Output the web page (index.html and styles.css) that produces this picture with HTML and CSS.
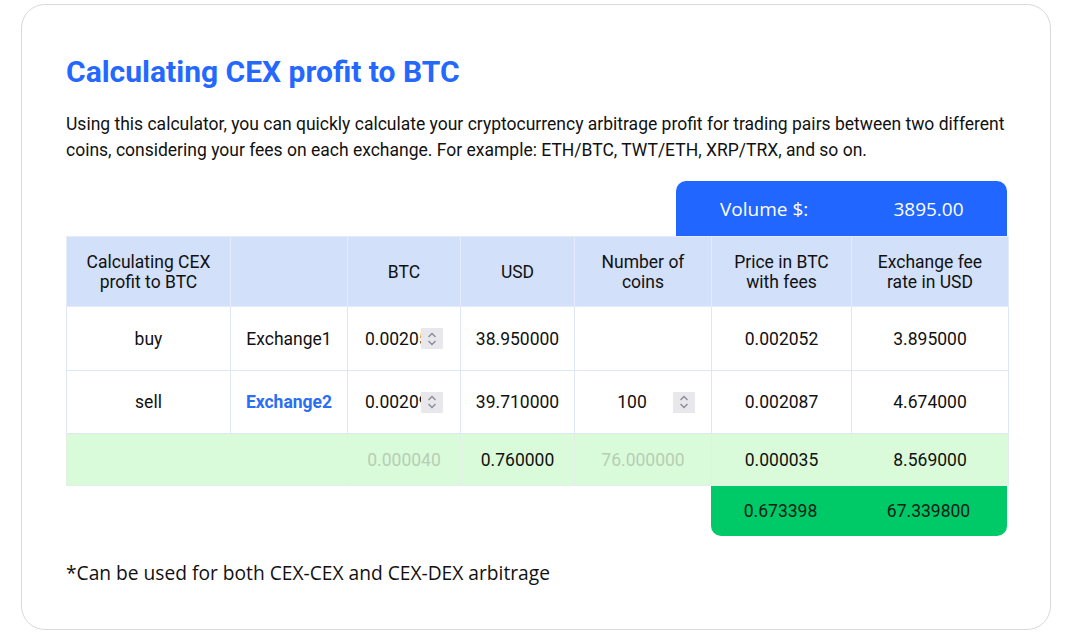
FILE: index.html
```html
<!DOCTYPE html>
<html lang="en">
<head>
  <meta charset="UTF-8" />
  <meta name="viewport" content="width=device-width, initial-scale=1.0" />
  <title>Calculating CEX profit to BTC</title>
  <link rel="stylesheet" href="styles.css">
</head>
<body>

  <div class="card">
    <h1>Calculating CEX profit to BTC</h1>
    <p class="intro">
      Using this calculator, you can quickly calculate your cryptocurrency arbitrage profit for trading pairs between two different
      coins, considering your fees on each exchange. For example: ETH/BTC, TWT/ETH, XRP/TRX, and so on.
    </p>

    <div class="volume-wrap">
      <div class="volume">
        <span class="volume-label">Volume $:</span>
        <span class="volume-value">3895.00</span>
      </div>
    </div>

    <table class="calc">
      <colgroup>
        <col style="width:164px">
        <col style="width:117px">
        <col style="width:113px">
        <col style="width:114px">
        <col style="width:137px">
        <col style="width:140px">
        <col style="width:157px">
      </colgroup>
      <thead>
        <tr>
          <th>Calculating CEX<br>profit to BTC</th>
          <th></th>
          <th>BTC</th>
          <th>USD</th>
          <th>Number of<br>coins</th>
          <th>Price in BTC<br>with fees</th>
          <th>Exchange fee<br>rate in USD</th>
        </tr>
      </thead>
      <tbody>
        <tr class="row-buy">
          <td>buy</td>
          <td>Exchange1</td>
          <td class="input-cell">
            <div class="num num-btc">
              <span class="num-text">0.00205</span>
              <span class="spin"><svg width="10" height="16" viewBox="0 0 10 16"><path d="M1.5 6 L5 2.5 L8.5 6 M1.5 10 L5 13.5 L8.5 10" fill="none" stroke="#8a8a92" stroke-width="1.3"/></svg></span>
            </div>
          </td>
          <td>38.950000</td>
          <td></td>
          <td>0.002052</td>
          <td>3.895000</td>
        </tr>
        <tr class="row-sell">
          <td>sell</td>
          <td class="exchange-link">Exchange2</td>
          <td class="input-cell">
            <div class="num num-btc">
              <span class="num-text">0.00209</span>
              <span class="spin"><svg width="10" height="16" viewBox="0 0 10 16"><path d="M1.5 6 L5 2.5 L8.5 6 M1.5 10 L5 13.5 L8.5 10" fill="none" stroke="#8a8a92" stroke-width="1.3"/></svg></span>
            </div>
          </td>
          <td>39.710000</td>
          <td class="input-cell">
            <div class="num num-coins">
              <span class="num-text">100</span>
              <span class="spin"><svg width="10" height="16" viewBox="0 0 10 16"><path d="M1.5 6 L5 2.5 L8.5 6 M1.5 10 L5 13.5 L8.5 10" fill="none" stroke="#8a8a92" stroke-width="1.3"/></svg></span>
            </div>
          </td>
          <td>0.002087</td>
          <td>4.674000</td>
        </tr>
        <tr class="row-diff">
          <td colspan="2"></td>
          <td class="dim">0.000040</td>
          <td>0.760000</td>
          <td class="dim">76.000000</td>
          <td>0.000035</td>
          <td>8.569000</td>
        </tr>
      </tbody>
    </table>

    <div class="total-wrap">
      <div class="total">
        <span>0.673398</span>
        <span>67.339800</span>
      </div>
    </div>

    <p class="note">*Can be used for both CEX-CEX and CEX-DEX arbitrage</p>
  </div>

</body>
</html>
```

FILE: styles.css
```css
body {
  margin: 0;
  font-family: Roboto, "Liberation Sans", sans-serif;
  background-color: #ffffff;
  color: #111111;
}

.card {
  margin: 4px 0 0 21px;
  width: 1030px;
  height: 626px;
  box-sizing: border-box;
  border: 1px solid #d9d9d9;
  border-radius: 24px;
  padding: 49px 43px 0 44px;
}

h1 {
  margin: 0;
  font-size: 30px;
  line-height: 36px;
  font-weight: 700;
  color: #2468ff;
}

.intro {
  margin: 21px 0 0 0;
  font-size: 17.5px;
  line-height: 26px;
}

.volume-wrap {
  display: flex;
  justify-content: flex-end;
  margin-top: 18px;
}

.volume {
  width: 331px;
  height: 55px;
  background-color: #2166fe;
  border-radius: 10px 10px 0 0;
  color: white;
  font-family: "Open Sans", "Noto Sans", sans-serif;
  font-size: 19px;
  display: grid;
  grid-template-columns: 1fr 157px;
  align-items: center;
}

.volume-label {
  padding-left: 44px;
}

.volume-value {
  text-align: center;
}

table.calc {
  width: 942px;
  table-layout: fixed;
  border-collapse: collapse;
  font-size: 17.5px;
}

.calc th, .calc td {
  border: 1px solid #dfe7f4;
  text-align: center;
  padding: 0;
}

.calc th {
  background-color: #d2e0fa;
  border-color: #e4ecfb;
  font-weight: 400;
  line-height: 20px;
  height: 69px;
}

.row-buy td {
  height: 63px;
}

.row-sell td {
  height: 62px;
}

.calc td.exchange-link {
  color: #2a6ef6;
  font-weight: 700;
}

.row-diff td {
  height: 51px;
  background-color: #d9fbd9;
  border-color: #e2eee6;
}

.row-diff td.dim {
  color: #b6ceb6;
}

.calc td.input-cell {
  text-align: left;
}

.num {
  display: inline-flex;
  align-items: center;
  vertical-align: middle;
}

.num-text {
  overflow: hidden;
  white-space: nowrap;
}

.num-btc {
  margin-left: 17px;
}

.num-btc .num-text {
  width: 56px;
}

.num-coins {
  margin-left: 16px;
}

.num-coins .num-text {
  width: 82px;
  text-align: center;
}

.spin {
  width: 22px;
  height: 21px;
  background-color: #e7e7ec;
  display: flex;
  align-items: center;
  justify-content: center;
}

.total-wrap {
  display: flex;
  justify-content: flex-end;
}

.total {
  width: 296px;
  height: 50px;
  background-color: #00c968;
  border-radius: 0 0 10px 10px;
  display: grid;
  grid-template-columns: 139px 157px;
  align-items: center;
  text-align: center;
  font-size: 17.5px;
  color: #0b1f14;
}

.note {
  margin: 25px 0 0 0;
  font-family: "Open Sans", "Noto Sans", sans-serif;
  font-size: 19.2px;
  line-height: 24px;
}
```
